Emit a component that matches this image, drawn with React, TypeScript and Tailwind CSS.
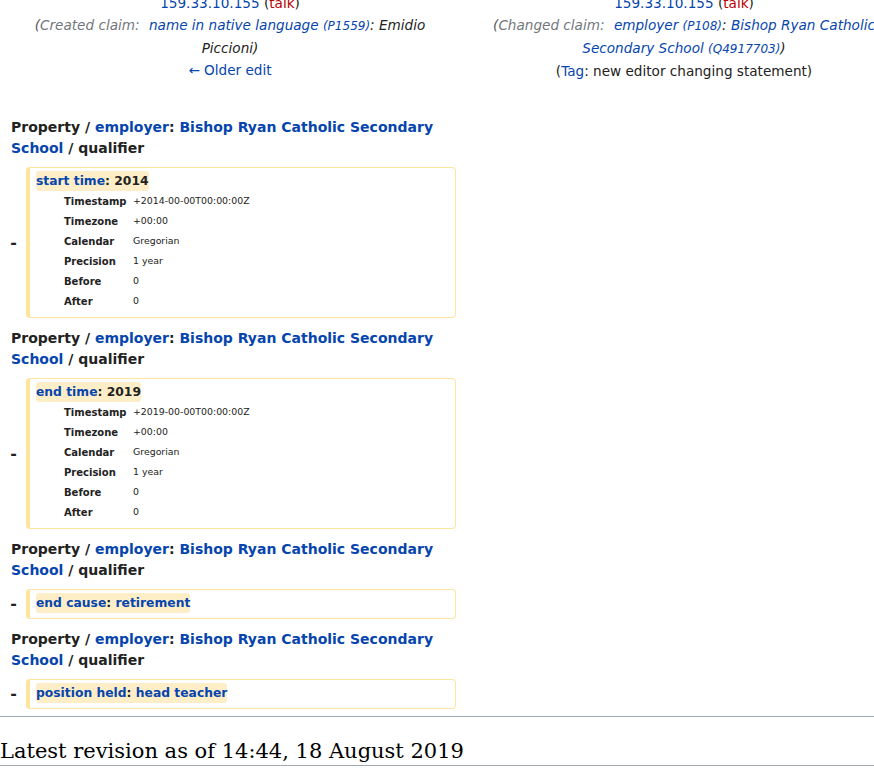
import React from "react";

const L = "text-[#0645ad]";

function Lineno() {
  return (
    <div className="pl-[11px] pt-[1px] w-[456px] pr-[8px] text-[14px] leading-[21px] font-bold text-[#222]">
      Property / <span className={L}>employer</span>:{" "}
      <span className={L}>Bishop Ryan Catholic Secondary School</span> / qualifier
    </div>
  );
}

type Row = [string, string];

function Box({ name, value, valueLink, rows, last }: { name: string; value: string; valueLink?: boolean; rows?: Row[]; last?: boolean }) {
  return (
    <div className={"flex items-center mt-[8.5px] " + (last ? "" : "mb-[8.5px]")}>
      <div className="w-[26px] shrink-0 pr-[9px] text-right font-bold text-[16px] leading-[16px] text-[#222]">-</div>
      <div className={"w-[430px] shrink-0 border border-[#ffe49c] border-l-4 rounded-[4px] pl-[6px] pt-[3px] " + (rows ? "pb-[6px]" : "pb-[5px]")}>
        <div className="flex">
          <span className="bg-[#feeec8] rounded-[3px] leading-[20px] text-[12.32px] font-bold text-[#222]">
            <span className={L}>{name}</span>: <span className={valueLink ? L : ""}>{value}</span>
          </span>
        </div>
        {rows && (
          <div className="pl-[28px] grid grid-cols-[69px_auto] text-[#222]">
            {rows.map(([k, v]) => (
              <React.Fragment key={k}>
                <div className="h-[20px] flex items-center font-bold text-[10px]">{k}</div>
                <div className="h-[20px] flex items-center text-[9.4px]">{v}</div>
              </React.Fragment>
            ))}
          </div>
        )}
      </div>
    </div>
  );
}

const rows = (y: string): Row[] => [
  ["Timestamp", `+${y}-00-00T00:00:00Z`],
  ["Timezone", "+00:00"],
  ["Calendar", "Gregorian"],
  ["Precision", "1 year"],
  ["Before", "0"],
  ["After", "0"],
];

export default function App() {
  return (
    <div className="w-[874px] h-[772px] overflow-hidden bg-white font-['DejaVu_Sans',sans-serif] text-[#222]">
      <div className="flex -mt-[8px] text-[13.6px] leading-[22px]">
        <div className="w-[460px] shrink-0 px-[12px] text-center">
          <div>
            <span className={L}>159.33.10.155</span> (<span className="text-[#ba0000]">talk</span>)
          </div>
          <div className="italic">
            <span className="text-[#54595d]">(</span>
            <span className="text-[#72777d]">Created claim:</span>{" "}
            <span className={L + " ml-[5px]"}>name in native language</span>{" "}
            <span className={L + " text-[12px]"}>(P1559)</span>: Emidio Piccioni)
          </div>
          <div>
            <span className={L}>← Older edit</span>
          </div>
        </div>
        <div className="w-[448px] shrink-0 px-[8px] text-center">
          <div>
            <span className={L}>159.33.10.155</span> (<span className="text-[#ba0000]">talk</span>)
          </div>
          <div className="italic">
            <span className="text-[#54595d]">(</span>
            <span className="text-[#72777d]">Changed claim:</span>{" "}
            <span className={L + " ml-[5px]"}>employer</span>{" "}
            <span className={L + " text-[12px]"}>(P108)</span>:{" "}
            <span className={L}>Bishop Ryan Catholic Secondary School</span>{" "}
            <span className={L + " text-[12px]"}>(Q4917703)</span>)
          </div>
          <div>
            (<span className={L}>Tag</span>: new editor changing statement)
          </div>
        </div>
      </div>

      <div className="mt-[33.5px]">
        <Lineno />
        <Box name="start time" value="2014" rows={rows("2014")} />
        <Lineno />
        <Box name="end time" value="2019" rows={rows("2019")} />
        <Lineno />
        <Box name="end cause" value="retirement" valueLink />
        <Lineno />
        <Box name="position held" value="head teacher" valueLink last />
      </div>

      <div className="mt-[7px] h-px bg-[#a2a9b1]" />

      <h2 className="mt-[20px] pt-[1px] border-b border-[#a2a9b1] font-['DejaVu_Serif',serif] text-[21px] leading-[27px] text-black">
        Latest revision as of 14:44, 18 August 2019
      </h2>
    </div>
  );
}
